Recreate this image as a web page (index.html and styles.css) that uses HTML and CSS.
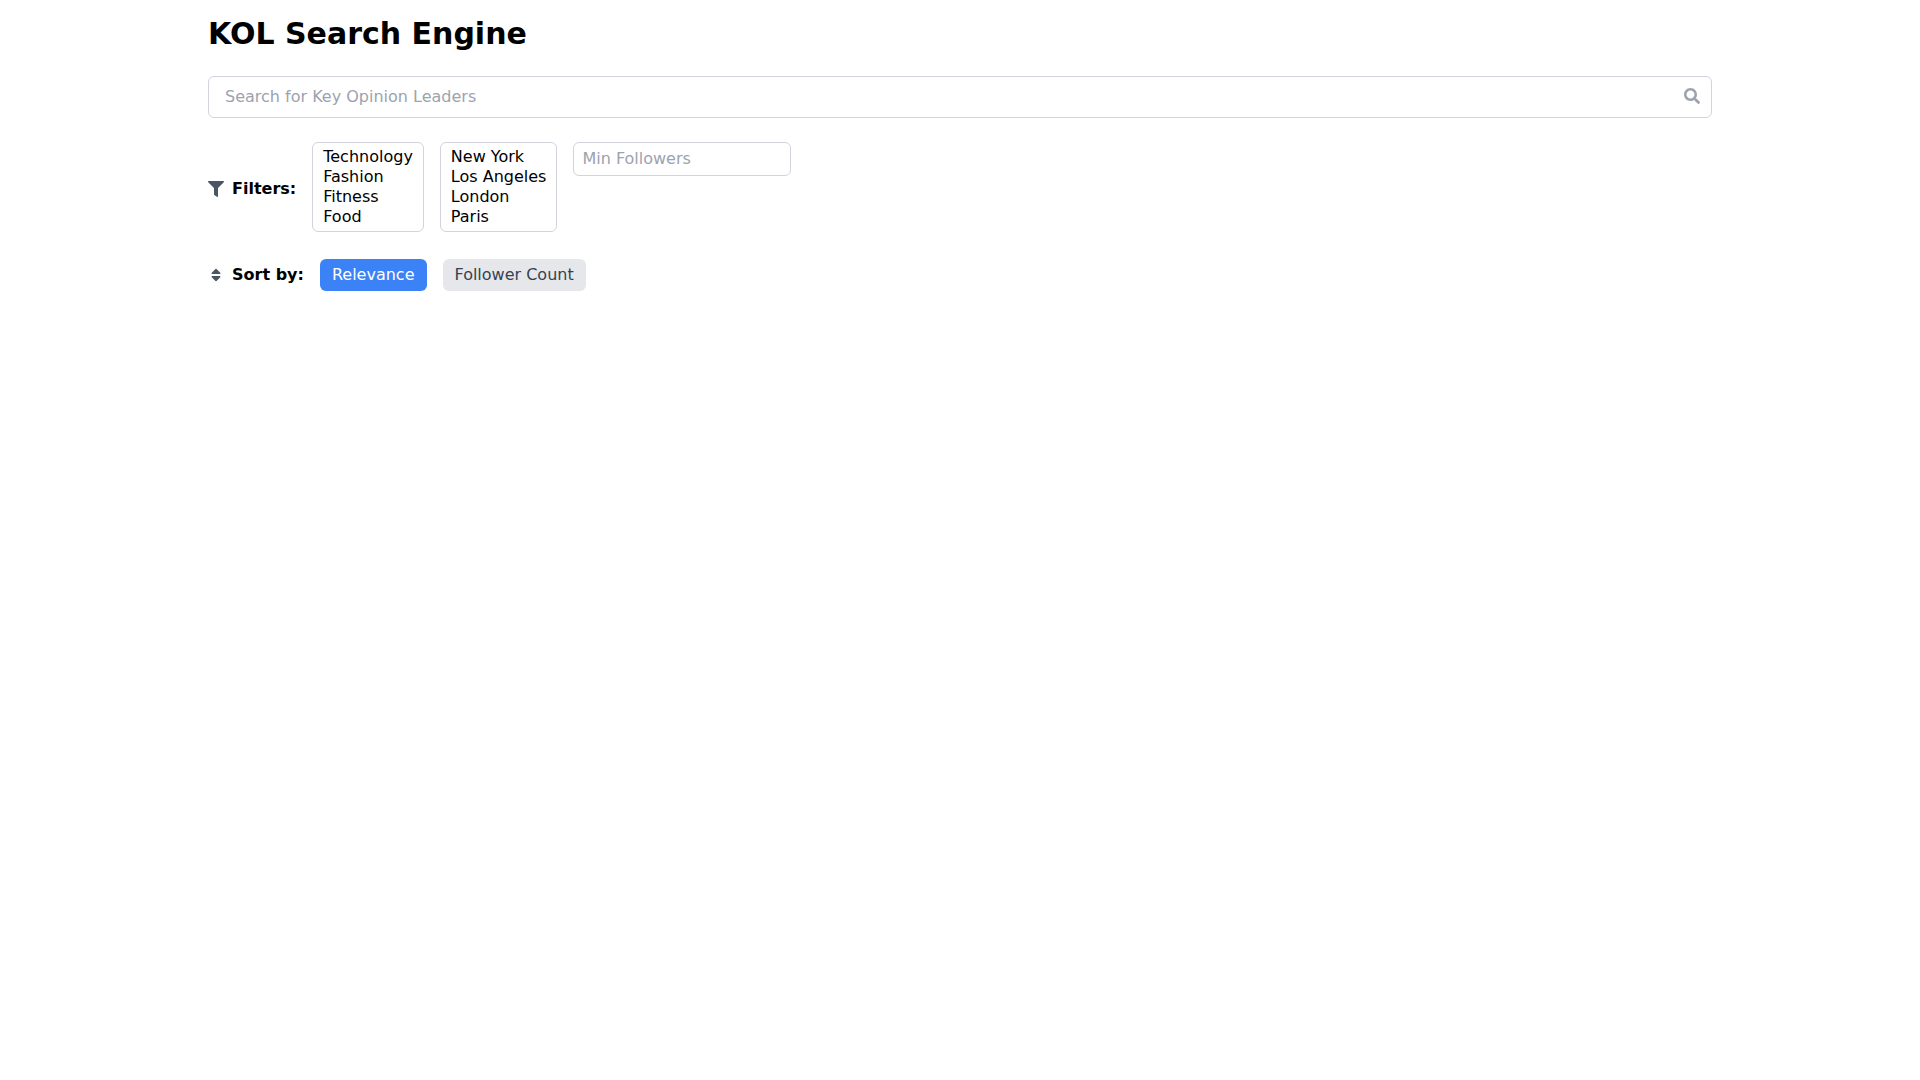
FILE: index.html
```html
<!DOCTYPE html>
<html lang="en">
<head>
<meta charset="utf-8">
<title>KOL Search Engine</title>
<link rel="stylesheet" href="styles.css">
</head>
<body>
<main class="container">
  <h1 class="title">KOL Search Engine</h1>
  <div class="search">
    <input class="search-input" type="text" placeholder="Search for Key Opinion Leaders">
    <svg class="search-icon" viewBox="0 0 512 512" width="16" height="16"><path fill="currentColor" d="M505 442.7L405.300 343c-4.500-4.500-10.600-7-17-7H372c27.600-35.300 44-79.700 44-128C416 93.100 322.900 0 208 0S0 93.100 0 208s93.100 208 208 208c48.300 0 92.700-16.400 128-44v16.300c0 6.400 2.500 12.500 7 17l99.700 99.700c9.400 9.400 24.600 9.400 33.900 0l28.300-28.300c9.400-9.400 9.400-24.600.1-34zM208 336c-70.700 0-128-57.200-128-128 0-70.700 57.200-128 128-128 70.700 0 128 57.200 128 128 0 70.700-57.200 128-128 128z"/></svg>
  </div>
  <div class="filters">
    <div class="label">
      <svg class="icon" viewBox="0 0 512 512" width="16" height="16"><path fill="currentColor" d="M487.976 0H24.028C2.710 0-8.047 25.866 7.058 40.971L192 225.941V432c0 7.831 3.821 15.170 10.237 19.662l80 55.980C298.020 518.690 320 507.493 320 487.980V225.941l184.947-184.970C520.021 25.896 509.338 0 487.976 0z"/></svg>
      <span>Filters:</span>
    </div>
    <select class="list" multiple size="4">
      <option>Technology</option><option>Fashion</option><option>Fitness</option><option>Food</option>
    </select>
    <select class="list" multiple size="4">
      <option>New York</option><option>Los Angeles</option><option>London</option><option>Paris</option>
    </select>
    <input class="min" type="number" placeholder="Min Followers">
  </div>
  <div class="sort">
    <div class="label">
      <svg class="icon" viewBox="0 0 320 512" width="16" height="16"><path fill="currentColor" d="M41 288h238c21.400 0 32.100 25.900 17 41L177 448c-9.400 9.400-24.600 9.400-33.900 0L24 329c-15.100-15.100-4.400-41 17-41zm255-105L177 64c-9.400-9.400-24.600-9.400-33.900 0L24 183c-15.100 15.100-4.400 41 17 41h238c21.400 0 32.100-25.900 17-41z"/></svg>
      <span>Sort by:</span>
    </div>
    <button class="btn btn-active">Relevance</button>
    <button class="btn">Follower Count</button>
  </div>
</main>
</body>
</html>
```

FILE: styles.css
```css
* { box-sizing: border-box; }
html, body { margin: 0; padding: 0; background: #fff; }
body { font-family: "DejaVu Sans", sans-serif; font-size: 16px; line-height: 1.5; color: #000; }
.container { width: 1536px; margin: 0 auto; padding: 16px 16px 0; }
.title { margin: 0 0 24px; font-size: 30px; line-height: 36px; font-weight: 700; }
.search { position: relative; margin-bottom: 24px; }
.search-input { display: block; width: 100%; height: 42px; padding: 7px 16px 9px; border: 1px solid #d1d5db; border-radius: 6px; font: inherit; outline: 0; }
.search-input::placeholder, .min::placeholder { color: #9ca3af; opacity: 1; }
.search-icon { position: absolute; right: 12px; top: 12px; color: #9ca3af; }
.filters { display: flex; align-items: center; gap: 16px; min-height: 93px; margin-bottom: 24px; }
.label { display: flex; align-items: center; gap: 8px; font-weight: 700; }
.icon { color: #4b5563; display: block; }
.list { border: 1px solid #d1d5db; border-radius: 6px; padding: 4px 8px; font: 16px "DejaVu Sans", sans-serif; background: #fff; overflow: hidden; align-self: flex-start; outline: 0; }
.min { width: 218px; height: 34px; padding: 3px 8px 5px; border: 1px solid #d1d5db; border-radius: 6px; font: inherit; outline: 0; align-self: flex-start; }
.sort { display: flex; align-items: center; gap: 16px; }
.btn { height: 32px; padding: 4px 12px; border: 0; border-radius: 6px; font: inherit; background: #e5e7eb; color: #374151; }
.btn-active { background: #3b82f6; color: #fff; }
```
